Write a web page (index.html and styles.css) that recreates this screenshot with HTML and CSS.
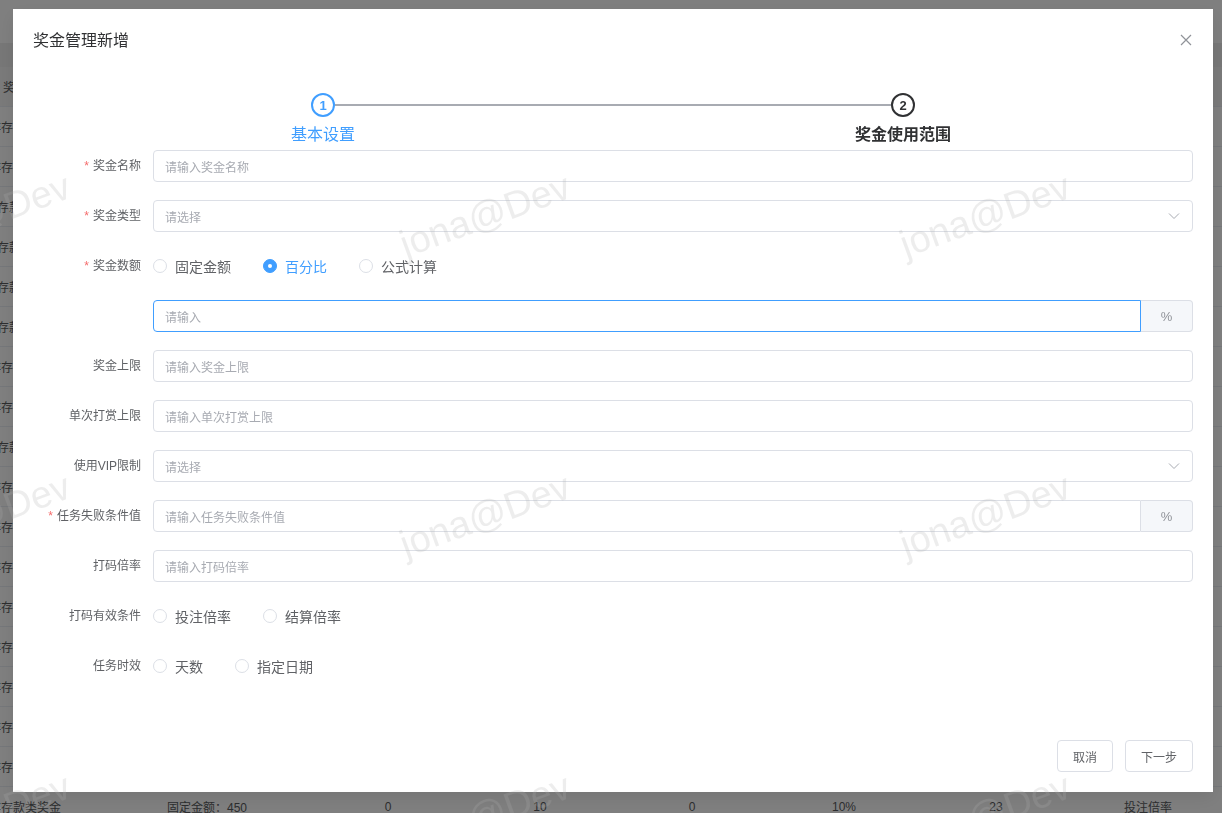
FILE: index.html
```html
<!DOCTYPE html>
<html lang="zh-CN">
<head>
<meta charset="utf-8">
<title>奖金管理新增</title>
<link rel="stylesheet" href="styles.css">
</head>
<body>
<div class="page">
  <div class="topbar"></div>
  <div class="band"></div>
  <div class="table">
    <div class="row thead"><span class="c1 h">奖金名称</span><span class="c2">奖金数额</span><span class="cc">奖金上限</span><span class="cc">单次上限</span><span class="cc">VIP</span><span class="cc">失败条件</span><span class="cc">打码倍率</span><span class="cc">有效条件</span></div>
    <div class="row"><span class="c1">非存款类奖金</span><span class="c2">固定金额：450</span><span class="cc">0</span><span class="cc">10</span><span class="cc">0</span><span class="cc">10%</span><span class="cc">23</span><span class="cc">投注倍率</span></div>
    <div class="row"><span class="c1">非存款类奖金</span><span class="c2">固定金额：450</span><span class="cc">0</span><span class="cc">10</span><span class="cc">0</span><span class="cc">10%</span><span class="cc">23</span><span class="cc">投注倍率</span></div>
    <div class="row"><span class="c1 b">存款类奖金</span><span class="c2">固定金额：450</span><span class="cc">0</span><span class="cc">10</span><span class="cc">0</span><span class="cc">10%</span><span class="cc">23</span><span class="cc">投注倍率</span></div>
    <div class="row"><span class="c1 b">存款类奖金</span><span class="c2">固定金额：450</span><span class="cc">0</span><span class="cc">10</span><span class="cc">0</span><span class="cc">10%</span><span class="cc">23</span><span class="cc">投注倍率</span></div>
    <div class="row"><span class="c1 b">存款类奖金</span><span class="c2">固定金额：450</span><span class="cc">0</span><span class="cc">10</span><span class="cc">0</span><span class="cc">10%</span><span class="cc">23</span><span class="cc">投注倍率</span></div>
    <div class="row"><span class="c1 b">存款类奖金</span><span class="c2">固定金额：450</span><span class="cc">0</span><span class="cc">10</span><span class="cc">0</span><span class="cc">10%</span><span class="cc">23</span><span class="cc">投注倍率</span></div>
    <div class="row"><span class="c1">非存款类奖金</span><span class="c2">固定金额：450</span><span class="cc">0</span><span class="cc">10</span><span class="cc">0</span><span class="cc">10%</span><span class="cc">23</span><span class="cc">投注倍率</span></div>
    <div class="row"><span class="c1">非存款类奖金</span><span class="c2">固定金额：450</span><span class="cc">0</span><span class="cc">10</span><span class="cc">0</span><span class="cc">10%</span><span class="cc">23</span><span class="cc">投注倍率</span></div>
    <div class="row"><span class="c1 b">存款类奖金</span><span class="c2">固定金额：450</span><span class="cc">0</span><span class="cc">10</span><span class="cc">0</span><span class="cc">10%</span><span class="cc">23</span><span class="cc">投注倍率</span></div>
    <div class="row"><span class="c1">非存款类奖金</span><span class="c2">固定金额：450</span><span class="cc">0</span><span class="cc">10</span><span class="cc">0</span><span class="cc">10%</span><span class="cc">23</span><span class="cc">投注倍率</span></div>
    <div class="row"><span class="c1">非存款类奖金</span><span class="c2">固定金额：450</span><span class="cc">0</span><span class="cc">10</span><span class="cc">0</span><span class="cc">10%</span><span class="cc">23</span><span class="cc">投注倍率</span></div>
    <div class="row"><span class="c1">非存款类奖金</span><span class="c2">固定金额：450</span><span class="cc">0</span><span class="cc">10</span><span class="cc">0</span><span class="cc">10%</span><span class="cc">23</span><span class="cc">投注倍率</span></div>
    <div class="row"><span class="c1">非存款类奖金</span><span class="c2">固定金额：450</span><span class="cc">0</span><span class="cc">10</span><span class="cc">0</span><span class="cc">10%</span><span class="cc">23</span><span class="cc">投注倍率</span></div>
    <div class="row"><span class="c1">非存款类奖金</span><span class="c2">固定金额：450</span><span class="cc">0</span><span class="cc">10</span><span class="cc">0</span><span class="cc">10%</span><span class="cc">23</span><span class="cc">投注倍率</span></div>
    <div class="row"><span class="c1">非存款类奖金</span><span class="c2">固定金额：450</span><span class="cc">0</span><span class="cc">10</span><span class="cc">0</span><span class="cc">10%</span><span class="cc">23</span><span class="cc">投注倍率</span></div>
    <div class="row"><span class="c1">非存款类奖金</span><span class="c2">固定金额：450</span><span class="cc">0</span><span class="cc">10</span><span class="cc">0</span><span class="cc">10%</span><span class="cc">23</span><span class="cc">投注倍率</span></div>
    <div class="row"><span class="c1">非存款类奖金</span><span class="c2">固定金额：450</span><span class="cc">0</span><span class="cc">10</span><span class="cc">0</span><span class="cc">10%</span><span class="cc">23</span><span class="cc">投注倍率</span></div>
    <div class="row"><span class="c1">非存款类奖金</span><span class="c2">固定金额：450</span><span class="cc">0</span><span class="cc">10</span><span class="cc">0</span><span class="cc">10%</span><span class="cc">23</span><span class="cc">投注倍率</span></div>
  </div>
</div>

<div class="mask"></div>

<div class="dialog-wrap">
  <div class="dialog">
    <div class="dialog-header">
      <span class="dialog-title">奖金管理新增</span>
      <button class="close-btn" aria-label="关闭">
        <svg width="12" height="12" viewBox="0 0 12 12"><path d="M1 1L11 11M11 1L1 11" stroke="#909399" stroke-width="1.2" fill="none"/></svg>
      </button>
    </div>
    <div class="dialog-body">
      <div class="steps">
        <div class="steps-head">
          <span class="step-spacer"></span>
          <span class="step-icon active">1</span>
          <span class="step-line"></span>
          <span class="step-icon current">2</span>
          <span class="step-spacer"></span>
        </div>
        <div class="steps-titles">
          <span class="step-title active">基本设置</span>
          <span class="step-title current">奖金使用范围</span>
        </div>
      </div>

      <div class="form">
        <div class="form-item">
          <label class="form-label required">奖金名称</label>
          <div class="form-content"><div class="input"><span class="ph">请输入奖金名称</span></div></div>
        </div>
        <div class="form-item">
          <label class="form-label required">奖金类型</label>
          <div class="form-content"><div class="input select"><span class="ph">请选择</span>
            <svg class="arrow" width="14" height="14" viewBox="0 0 14 14"><path d="M2 4.5L7 9.5L12 4.5" stroke="#a8abb2" stroke-width="1" fill="none"/></svg></div></div>
        </div>
        <div class="form-item">
          <label class="form-label required">奖金数额</label>
          <div class="form-content radios">
            <span class="radio"><span class="radio-dot"></span><span class="radio-label">固定金额</span></span>
            <span class="radio checked"><span class="radio-dot"></span><span class="radio-label">百分比</span></span>
            <span class="radio"><span class="radio-dot"></span><span class="radio-label">公式计算</span></span>
          </div>
        </div>
        <div class="form-item">
          <label class="form-label"></label>
          <div class="form-content group">
            <div class="input focus grouped"><span class="ph">请输入</span></div>
            <div class="append">%</div>
          </div>
        </div>
        <div class="form-item">
          <label class="form-label">奖金上限</label>
          <div class="form-content"><div class="input"><span class="ph">请输入奖金上限</span></div></div>
        </div>
        <div class="form-item">
          <label class="form-label">单次打赏上限</label>
          <div class="form-content"><div class="input"><span class="ph">请输入单次打赏上限</span></div></div>
        </div>
        <div class="form-item">
          <label class="form-label">使用VIP限制</label>
          <div class="form-content"><div class="input select"><span class="ph">请选择</span>
            <svg class="arrow" width="14" height="14" viewBox="0 0 14 14"><path d="M2 4.5L7 9.5L12 4.5" stroke="#a8abb2" stroke-width="1" fill="none"/></svg></div></div>
        </div>
        <div class="form-item">
          <label class="form-label required">任务失败条件值</label>
          <div class="form-content group">
            <div class="input grouped"><span class="ph">请输入任务失败条件值</span></div>
            <div class="append">%</div>
          </div>
        </div>
        <div class="form-item">
          <label class="form-label">打码倍率</label>
          <div class="form-content"><div class="input"><span class="ph">请输入打码倍率</span></div></div>
        </div>
        <div class="form-item">
          <label class="form-label">打码有效条件</label>
          <div class="form-content radios">
            <span class="radio"><span class="radio-dot"></span><span class="radio-label">投注倍率</span></span>
            <span class="radio"><span class="radio-dot"></span><span class="radio-label">结算倍率</span></span>
          </div>
        </div>
        <div class="form-item">
          <label class="form-label">任务时效</label>
          <div class="form-content radios">
            <span class="radio"><span class="radio-dot"></span><span class="radio-label">天数</span></span>
            <span class="radio"><span class="radio-dot"></span><span class="radio-label">指定日期</span></span>
          </div>
        </div>
      </div>
    </div>
    <div class="dialog-footer">
      <button class="btn">取消</button>
      <button class="btn">下一步</button>
    </div>
  </div>
</div>

<div class="watermark">
  <div class="wm-grid">
    <span class="wm">jona@Dev</span><span class="wm">jona@Dev</span><span class="wm">jona@Dev</span><span class="wm">jona@Dev</span>
    <span class="wm">jona@Dev</span><span class="wm">jona@Dev</span><span class="wm">jona@Dev</span><span class="wm">jona@Dev</span>
    <span class="wm">jona@Dev</span><span class="wm">jona@Dev</span><span class="wm">jona@Dev</span><span class="wm">jona@Dev</span>
  </div>
</div>
</body>
</html>
```

FILE: styles.css
```css
* { box-sizing: border-box; margin: 0; padding: 0; }

html, body {
  width: 1222px;
  height: 813px;
  overflow: hidden;
}

body {
  font-family: "Liberation Sans", "Noto Sans CJK SC", sans-serif;
  background: #ffffff;
  color: #606266;
}

/* background page */
.topbar { height: 43px; }
.band { height: 24px; background: #eeeeee; }

.row {
  display: grid;
  grid-template-columns: 155px 157px repeat(6, 152px);
  height: 40px;
  align-items: center;
  border-bottom: 1px solid #ebeef5;
  font-size: 12px;
  color: #5a5c60;
  white-space: nowrap;
}
.thead { background: #f5f5f5; }
.c1 { text-indent: -11px; overflow: visible; }
.c1.b { text-indent: -3px; }
.c1.h { text-indent: 3px; }
.c2 { padding-left: 12px; }
.cc { text-align: center; }

.mask {
  position: fixed;
  inset: 0;
  background: rgba(0, 0, 0, 0.5);
}

/* dialog */
.dialog-wrap {
  position: fixed;
  inset: 0;
  overflow: hidden;
}

.dialog {
  position: relative;
  width: 1200px;
  margin: 9px 0 0 13px;
  background: #ffffff;
  box-shadow: 0 6px 16px rgba(0, 0, 0, 0.08);
}

.dialog-header {
  padding: 20px 20px 10px;
}
.dialog-title {
  display: block;
  font-size: 16px;
  line-height: 24px;
  color: #303133;
}
.close-btn {
  position: absolute;
  top: 4px;
  right: 0;
  width: 54px;
  height: 54px;
  border: none;
  background: transparent;
  display: flex;
  align-items: center;
  justify-content: center;
}

.dialog-body {
  padding: 30px 20px;
}

/* steps */
.steps-head {
  display: flex;
  align-items: center;
  height: 24px;
}
.step-spacer { width: 278px; flex: none; }
.step-icon {
  flex: none;
  width: 24px;
  height: 24px;
  border-radius: 50%;
  border: 2px solid #303133;
  color: #303133;
  font-size: 13px;
  font-weight: 700;
  display: flex;
  align-items: center;
  justify-content: center;
  background: #fff;
}
.step-icon.active { border-color: #409eff; color: #409eff; }
.step-line {
  flex: 1;
  height: 2px;
  background: #a8abb2;
}
.steps-titles {
  display: grid;
  grid-template-columns: 1fr 1fr;
  padding-top: 4px;
  height: 33px;
}
.step-title {
  text-align: center;
  font-size: 16px;
  line-height: 28px;
  color: #303133;
}
.step-title.active { color: #409eff; }
.step-title.current { font-weight: 700; }

/* form */
.form-item {
  display: flex;
  margin-bottom: 18px;
  min-height: 32px;
}
.form-label {
  flex: none;
  width: 120px;
  padding-right: 12px;
  text-align: right;
  font-size: 12px;
  line-height: 32px;
  color: #606266;
}
.form-label.required::before {
  content: "*";
  color: #f56c6c;
  margin-right: 4px;
}
.form-content {
  flex: 1;
  display: flex;
  align-items: center;
  min-height: 32px;
}

.input {
  flex: 1;
  height: 32px;
  border: 1px solid #dcdfe6;
  border-radius: 4px;
  padding: 0 11px;
  display: flex;
  align-items: center;
  background: #fff;
}
.input.focus { border-color: #409eff; }
.input.grouped { border-radius: 4px 0 0 4px; }
.ph {
  flex: 1;
  font-size: 12px;
  color: #a8abb2;
}
.arrow { flex: none; }

.append {
  flex: none;
  width: 52px;
  height: 32px;
  background: #f5f7fa;
  border: 1px solid #dcdfe6;
  border-left: none;
  border-radius: 0 4px 4px 0;
  display: flex;
  align-items: center;
  justify-content: center;
  font-size: 13px;
  color: #909399;
}

/* radios */
.radio {
  display: inline-flex;
  align-items: center;
  margin-right: 32px;
  height: 32px;
}
.radio-dot {
  position: relative;
  width: 14px;
  height: 14px;
  border-radius: 50%;
  border: 1px solid #dcdfe6;
  background: #fff;
}
.radio.checked .radio-dot {
  background: #409eff;
  border-color: #409eff;
}
.radio.checked .radio-dot::after {
  content: "";
  position: absolute;
  left: 50%;
  top: 50%;
  width: 4px;
  height: 4px;
  margin: -2px 0 0 -2px;
  border-radius: 50%;
  background: #fff;
}
.radio-label {
  padding-left: 8px;
  font-size: 14px;
  color: #606266;
}
.radio.checked .radio-label { color: #409eff; }

/* footer */
.dialog-footer {
  padding: 10px 20px 20px;
  display: flex;
  justify-content: flex-end;
  gap: 12px;
}
.btn {
  height: 32px;
  padding: 0 15px;
  font-family: inherit;
  font-size: 12px;
  color: #606266;
  background: #fff;
  border: 1px solid #dcdfe6;
  border-radius: 4px;
}

/* watermark overlay */
.watermark {
  position: fixed;
  inset: 0;
  overflow: hidden;
  pointer-events: none;
}
.wm-grid {
  display: grid;
  grid-template-columns: repeat(4, 500px);
  grid-auto-rows: 300px;
  margin: 65px 0 0 -265px;
  width: 2000px;
}
.wm {
  display: flex;
  align-items: center;
  justify-content: center;
  font-family: "Liberation Sans", sans-serif;
  font-size: 38px;
  color: rgba(173, 173, 173, 0.22);
  transform: rotate(-20deg);
  white-space: nowrap;
}
```
